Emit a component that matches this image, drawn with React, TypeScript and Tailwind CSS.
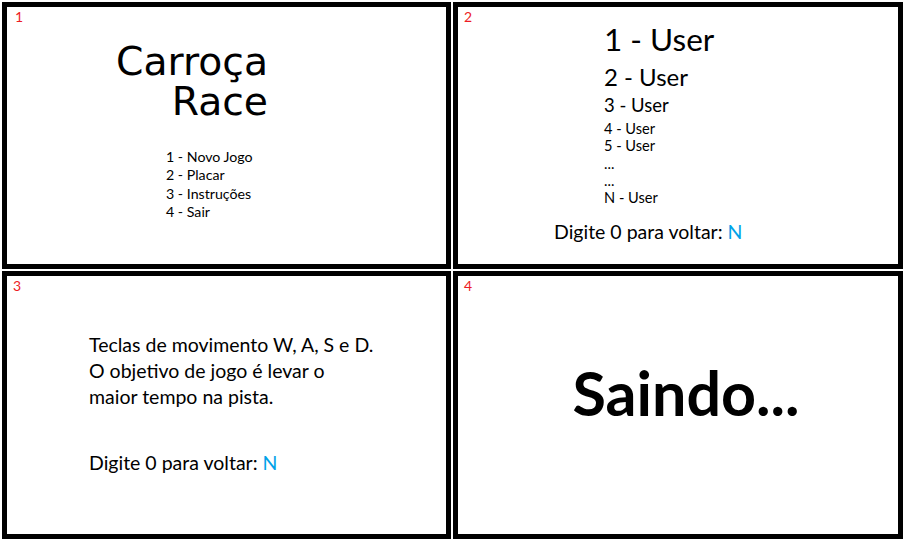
import type { ReactNode } from "react";

function Panel({
  label,
  labelClass = "left-[6px]",
  children,
  className = "",
}: {
  label: string;
  labelClass?: string;
  children: ReactNode;
  className?: string;
}) {
  return (
    <div className={`relative border-[5px] border-black bg-white overflow-hidden ${className}`}>
      <span className={`absolute top-[2px] text-[14px] leading-[1.2] text-[#ed1c24] ${labelClass}`}>{label}</span>
      {children}
    </div>
  );
}

function BackHint() {
  return (
    <p className="text-[19.5px] leading-[26px] text-black">
      Digite 0 para voltar: <span className="text-[#00a2e8]">N</span>
    </p>
  );
}

export default function App() {
  return (
    <div className="w-[913px] h-[546px] bg-white p-[2px] font-['Lato',sans-serif] text-black">
      <div className="grid grid-cols-[449px_450px] grid-rows-[267px_268px] gap-[2px]">
        <Panel label="1" labelClass="left-[8px]">
          <div className="flex flex-col pt-[35px]">
            <p className="ml-[109px] w-fit text-right font-['DejaVu_Sans',sans-serif] text-[39.3px] leading-[40px]">
              Carroça
              <br />
              Race
            </p>
            <ul className="ml-[159px] mt-[26px] text-[14.2px] leading-[18.33px]">
              <li>1 - Novo Jogo</li>
              <li>2 - Placar</li>
              <li>3 - Instruções</li>
              <li>4 - Sair</li>
            </ul>
          </div>
        </Panel>

        <Panel label="2">
          <div className="flex flex-col pt-[10px] pl-[96px]">
            <div className="ml-[50px] flex flex-col">
              <span className="text-[31.5px] leading-[44.5px]">1 - User</span>
              <span className="text-[24px] leading-[29.3px]">2 - User</span>
              <span className="text-[18.5px] leading-[28.9px]">3 - User</span>
              <p className="text-[14.6px] leading-[17.4px]">
                4 - User
                <br />
                5 - User
                <br />
                ...
                <br />
                ...
                <br />
                N - User
              </p>
            </div>
            <div className="mt-[12.5px]">
              <BackHint />
            </div>
          </div>
        </Panel>

        <Panel label="3">
          <div className="flex flex-col pt-[56px] pl-[82px]">
            <p className="text-[19.5px] leading-[26px]">
              Teclas de movimento W, A, S e D.
              <br />
              O objetivo de jogo é levar o
              <br />
              maior tempo na pista.
            </p>
            <div className="mt-[40px]">
              <BackHint />
            </div>
          </div>
        </Panel>

        <Panel label="4" className="flex items-center justify-center">
          <p className="pl-[16px] pb-[24px] text-[61px] leading-[1.2] font-bold">Saindo...</p>
        </Panel>
      </div>
    </div>
  );
}
